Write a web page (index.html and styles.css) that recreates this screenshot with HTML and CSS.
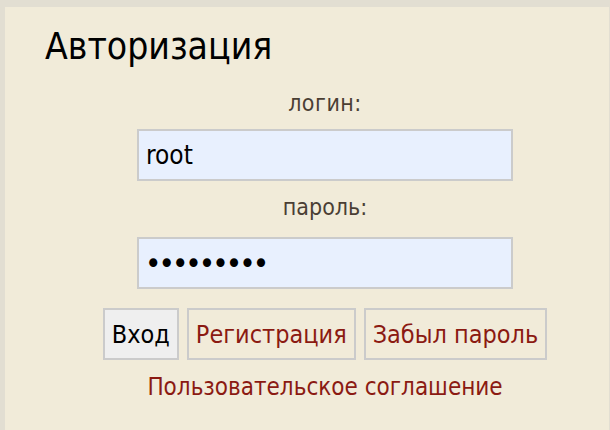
FILE: index.html
```html
<!DOCTYPE html>
<html lang="ru">
<head>
<meta charset="utf-8">
<link rel="stylesheet" href="styles.css">
</head>
<body>
<div class="page">
  <div class="panel">
    <h1 class="title">Авторизация</h1>
    <form class="form">
      <label class="label label-login" for="login">логин:</label>
      <input class="field" id="login" type="text" value="root">
      <label class="label label-pass" for="pass">пароль:</label>
      <input class="field field-pass" id="pass" type="password" value="123456789">
      <div class="buttons">
        <button type="button" class="btn btn-main">Вход</button>
        <button type="button" class="btn btn-link">Регистрация</button>
        <button type="button" class="btn btn-link">Забыл пароль</button>
      </div>
      <a class="agreement" href="#">Пользовательское соглашение</a>
    </form>
  </div>
</div>
</body>
</html>
```

FILE: styles.css
```css
html, body {
  margin: 0;
  padding: 0;
  height: 100%;
}
body {
  background: #e2ded2;
  font-family: "DejaVu Sans Condensed", "DejaVu Sans", Verdana, sans-serif;
}
.page {
  padding: 7px 1px 0 5px;
  height: 100%;
  box-sizing: border-box;
}
.panel {
  background: #f1ebd9;
  height: 100%;
  box-sizing: border-box;
  padding: 18px 4px 0 40px;
}
.title {
  margin: 0;
  font-size: 37px;
  font-weight: normal;
  color: #000;
  line-height: 44px;
}
.form {
  display: flex;
  flex-direction: column;
  align-items: center;
}
.label {
  font-size: 23px;
  color: #4a3e34;
  line-height: 27px;
}
.label-login {
  margin-top: 21px;
  margin-bottom: 12px;
  letter-spacing: 0.5px;
}
.label-pass {
  margin-top: 13px;
  margin-bottom: 16px;
}
.field {
  width: 376px;
  height: 52px;
  box-sizing: border-box;
  border: 2px solid #cbcbcb;
  background: #e8f0fe;
  font-family: "DejaVu Sans Condensed", "DejaVu Sans", Verdana, sans-serif;
  font-size: 26px;
  padding: 0 7px;
  color: #000;
  outline: none;
  margin: 0;
}
.field-pass {
  font-size: 31px;
  letter-spacing: -3px;
  padding: 0 6px;
}
.buttons {
  display: flex;
  gap: 8px;
  margin-top: 19px;
}
.btn {
  height: 52px;
  box-sizing: border-box;
  border: 2px solid #cbcbcb;
  font-family: "DejaVu Sans Condensed", "DejaVu Sans", Verdana, sans-serif;
  font-size: 25px;
  padding: 0 7px;
  background: transparent;
  border-radius: 0;
  margin: 0;
}
.btn-main {
  background: #efefef;
  color: #000;
}
.btn-link {
  color: #8b1a12;
}
.agreement {
  margin-top: 14px;
  font-size: 24px;
  line-height: 27px;
  color: #8b1a12;
  text-decoration: none;
}
```
